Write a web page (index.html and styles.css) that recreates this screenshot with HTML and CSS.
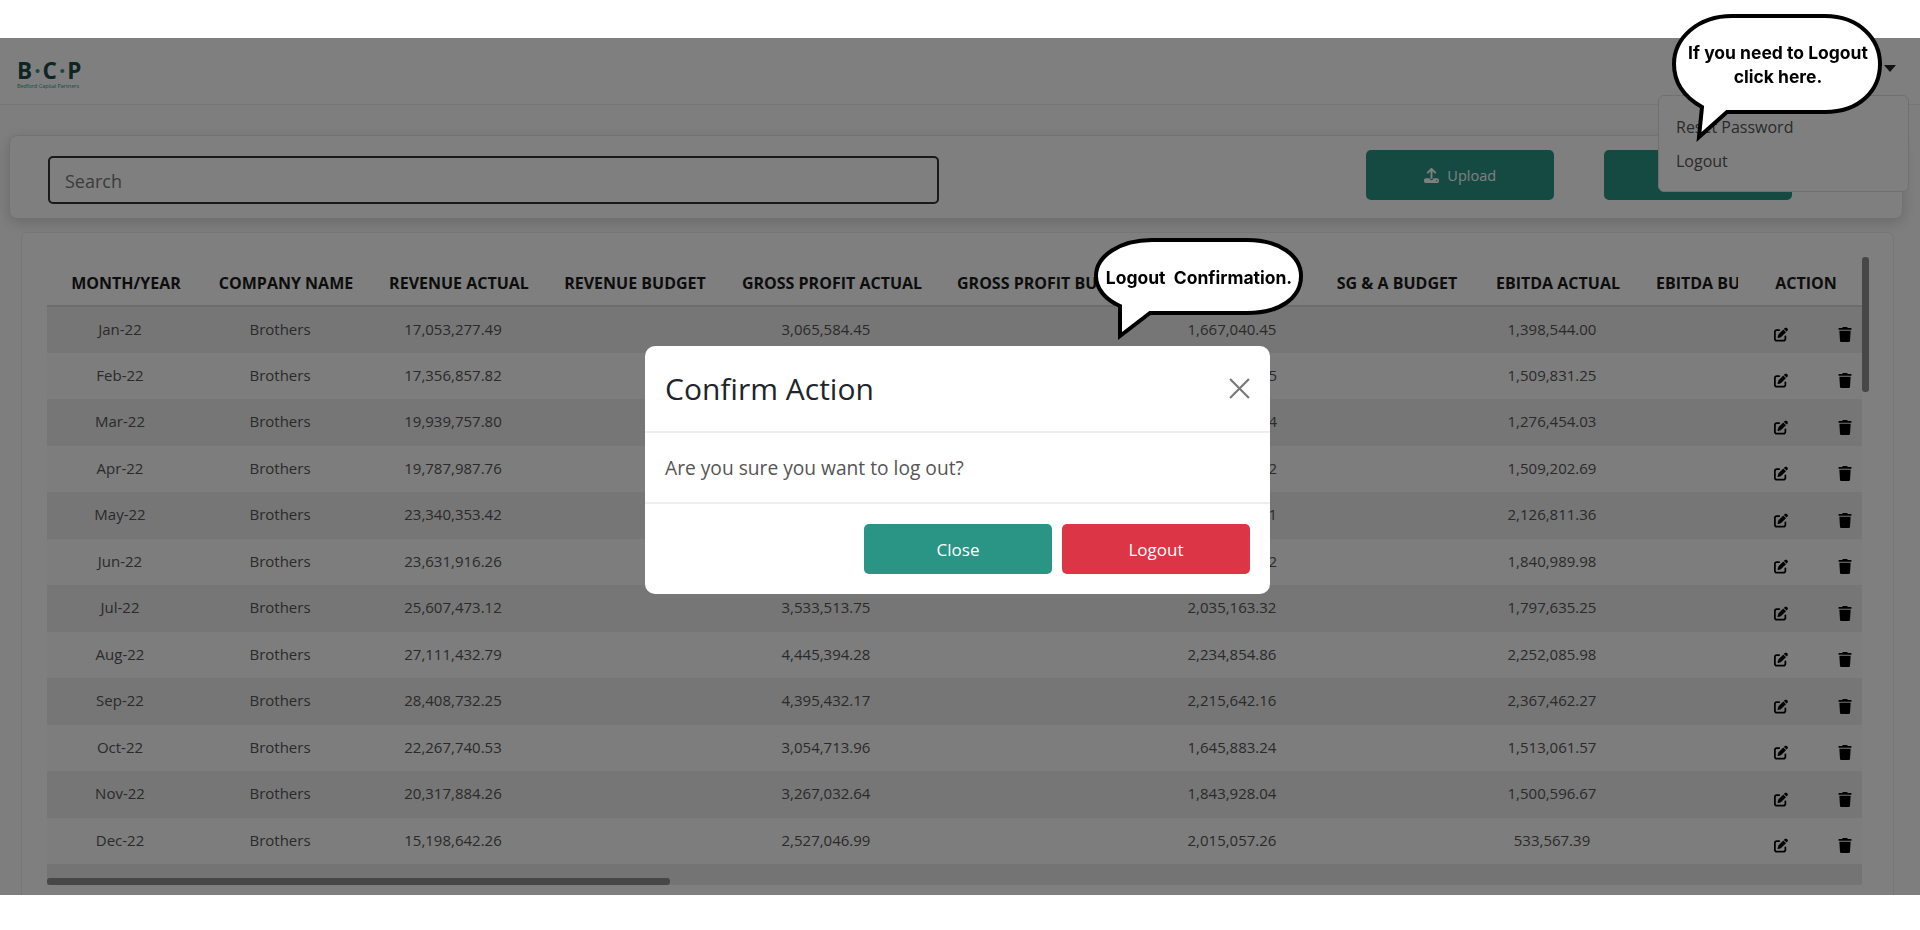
FILE: index.html
```html
<!DOCTYPE html>
<html lang="en">
<head>
  <meta charset="UTF-8">
  <meta name="viewport" content="width=device-width, initial-scale=1.0">
  <title>Confirm Action</title>
  <link rel="stylesheet" href="styles.css">
</head>
<body>
  <svg class="icon-defs" aria-hidden="true">
    <symbol id="icon-edit" viewBox="0 0 512 512"><path d="M471.6 21.7c-21.9-21.9-57.3-21.9-79.2 0L362.3 51.7l97.9 97.9 30.1-30.1c21.9-21.9 21.9-57.3 0-79.2L471.6 21.7zm-299.2 220c-6.1 6.1-10.8 13.6-13.5 21.9l-29.6 88.8c-2.9 8.6-.6 18.1 5.8 24.6s15.9 8.7 24.6 5.8l88.8-29.6c8.2-2.7 15.7-7.4 21.9-13.5L437.7 172.3 339.7 74.3 172.4 241.7zM96 64C43 64 0 107 0 160V416c0 53 43 96 96 96H352c53 0 96-43 96-96V320c0-17.7-14.3-32-32-32s-32 14.3-32 32v96c0 17.7-14.3 32-32 32H96c-17.7 0-32-14.3-32-32V160c0-17.7 14.3-32 32-32h96c17.7 0 32-14.3 32-32s-14.3-32-32-32H96z"/></symbol>
    <symbol id="icon-trash" viewBox="0 0 448 512"><path d="M135.2 17.7L128 32H32C14.3 32 0 46.3 0 64S14.3 96 32 96H416c17.7 0 32-14.3 32-32s-14.3-32-32-32H320l-7.2-14.3C307.4 6.8 296.3 0 284.2 0H163.8c-12.1 0-23.2 6.8-28.6 17.7zM416 128H32L53.2 467c1.6 25.3 22.6 45 47.9 45H346.9c25.3 0 46.3-19.7 47.9-45L416 128z"/></symbol>
  </svg>

  <div class="page">
    <div class="app">
      <nav class="navbar">
        <div class="logo">
          <div class="logo-mark">B<span>·</span>C<span>·</span>P</div>
          <div class="logo-name">Bedford Capital Partners</div>
        </div>
        <span class="caret"></span>
      </nav>

      <section class="toolbar">
        <input class="search" type="text" placeholder="Search">
        <button class="btn-upload">
          <svg class="upload-icon" viewBox="0 0 512 512"><path d="M288 109.3V352c0 17.7-14.3 32-32 32s-32-14.3-32-32V109.3l-73.4 73.4c-12.5 12.5-32.8 12.5-45.3 0s-12.5-32.8 0-45.3l128-128c12.5-12.5 32.8-12.5 45.3 0l128 128c12.5 12.5 12.5 32.8 0 45.3s-32.8 12.5-45.3 0L288 109.3zM64 352H192c0 35.3 28.7 64 64 64s64-28.7 64-64H448c35.3 0 64 28.7 64 64v32c0 35.3-28.7 64-64 64H64c-35.3 0-64-28.7-64-64V416c0-35.3 28.7-64 64-64zM432 456a24 24 0 1 0 0-48 24 24 0 1 0 0 48z"/></svg>
          Upload
        </button>
        <button class="btn-second"></button>
      </section>

      <section class="table-card">
        <div class="table-wrap">
          <table class="data-table">
            <thead>
              <tr>
                <th>MONTH/YEAR</th><th>COMPANY NAME</th><th>REVENUE ACTUAL</th><th>REVENUE BUDGET</th><th>GROSS PROFIT ACTUAL</th><th>GROSS PROFIT BUDGET</th><th>SG &amp; A ACTUAL</th><th>SG &amp; A BUDGET</th><th>EBITDA ACTUAL</th><th>EBITDA BUDGET</th><th class="action">ACTION</th>
              </tr>
            </thead>
            <tbody>
              <tr>
                <td>Jan-22</td><td>Brothers</td><td>17,053,277.49</td><td></td><td>3,065,584.45</td><td></td><td>1,667,040.45</td><td></td><td>1,398,544.00</td><td></td>
                <td class="action"><div class="row-icons"><svg><use href="#icon-edit"/></svg><svg><use href="#icon-trash"/></svg></div></td>
              </tr>
              <tr>
                <td>Feb-22</td><td>Brothers</td><td>17,356,857.82</td><td></td><td></td><td></td><td class="tail">5</td><td></td><td>1,509,831.25</td><td></td>
                <td class="action"><div class="row-icons"><svg><use href="#icon-edit"/></svg><svg><use href="#icon-trash"/></svg></div></td>
              </tr>
              <tr>
                <td>Mar-22</td><td>Brothers</td><td>19,939,757.80</td><td></td><td></td><td></td><td class="tail">4</td><td></td><td>1,276,454.03</td><td></td>
                <td class="action"><div class="row-icons"><svg><use href="#icon-edit"/></svg><svg><use href="#icon-trash"/></svg></div></td>
              </tr>
              <tr>
                <td>Apr-22</td><td>Brothers</td><td>19,787,987.76</td><td></td><td></td><td></td><td class="tail">2</td><td></td><td>1,509,202.69</td><td></td>
                <td class="action"><div class="row-icons"><svg><use href="#icon-edit"/></svg><svg><use href="#icon-trash"/></svg></div></td>
              </tr>
              <tr>
                <td>May-22</td><td>Brothers</td><td>23,340,353.42</td><td></td><td></td><td></td><td class="tail">1</td><td></td><td>2,126,811.36</td><td></td>
                <td class="action"><div class="row-icons"><svg><use href="#icon-edit"/></svg><svg><use href="#icon-trash"/></svg></div></td>
              </tr>
              <tr>
                <td>Jun-22</td><td>Brothers</td><td>23,631,916.26</td><td></td><td></td><td></td><td class="tail">2</td><td></td><td>1,840,989.98</td><td></td>
                <td class="action"><div class="row-icons"><svg><use href="#icon-edit"/></svg><svg><use href="#icon-trash"/></svg></div></td>
              </tr>
              <tr>
                <td>Jul-22</td><td>Brothers</td><td>25,607,473.12</td><td></td><td>3,533,513.75</td><td></td><td>2,035,163.32</td><td></td><td>1,797,635.25</td><td></td>
                <td class="action"><div class="row-icons"><svg><use href="#icon-edit"/></svg><svg><use href="#icon-trash"/></svg></div></td>
              </tr>
              <tr>
                <td>Aug-22</td><td>Brothers</td><td>27,111,432.79</td><td></td><td>4,445,394.28</td><td></td><td>2,234,854.86</td><td></td><td>2,252,085.98</td><td></td>
                <td class="action"><div class="row-icons"><svg><use href="#icon-edit"/></svg><svg><use href="#icon-trash"/></svg></div></td>
              </tr>
              <tr>
                <td>Sep-22</td><td>Brothers</td><td>28,408,732.25</td><td></td><td>4,395,432.17</td><td></td><td>2,215,642.16</td><td></td><td>2,367,462.27</td><td></td>
                <td class="action"><div class="row-icons"><svg><use href="#icon-edit"/></svg><svg><use href="#icon-trash"/></svg></div></td>
              </tr>
              <tr>
                <td>Oct-22</td><td>Brothers</td><td>22,267,740.53</td><td></td><td>3,054,713.96</td><td></td><td>1,645,883.24</td><td></td><td>1,513,061.57</td><td></td>
                <td class="action"><div class="row-icons"><svg><use href="#icon-edit"/></svg><svg><use href="#icon-trash"/></svg></div></td>
              </tr>
              <tr>
                <td>Nov-22</td><td>Brothers</td><td>20,317,884.26</td><td></td><td>3,267,032.64</td><td></td><td>1,843,928.04</td><td></td><td>1,500,596.67</td><td></td>
                <td class="action"><div class="row-icons"><svg><use href="#icon-edit"/></svg><svg><use href="#icon-trash"/></svg></div></td>
              </tr>
              <tr>
                <td>Dec-22</td><td>Brothers</td><td>15,198,642.26</td><td></td><td>2,527,046.99</td><td></td><td>2,015,057.26</td><td></td><td>533,567.39</td><td></td>
                <td class="action"><div class="row-icons"><svg><use href="#icon-edit"/></svg><svg><use href="#icon-trash"/></svg></div></td>
              </tr>
            </tbody>
          </table>
          <div class="hscroll-thumb"></div>
        </div>
        <div class="vscroll-thumb"></div>
      </section>

      <div class="dropdown">
        <a>Reset Password</a>
        <a>Logout</a>
      </div>

      <div class="backdrop"></div>

      <div class="modal">
        <div class="modal-header">
          <h2>Confirm Action</h2>
          <svg class="modal-close" viewBox="0 0 20 20"><path d="M1 1L19 19M19 1L1 19"/></svg>
        </div>
        <div class="modal-body">Are you sure you want to log out?</div>
        <div class="modal-footer">
          <button class="btn-close">Close</button>
          <button class="btn-logout">Logout</button>
        </div>
      </div>
    </div>

    <div class="callout callout-menu">
      <svg viewBox="0 0 216 132"><path d="M62 4H155C190 4 210 28 210 52C210 78 190 100 155 100H57L29 125L32 95C14 85 4 70 4 52C4 26 28 4 62 4Z"/></svg>
      <p>If you need to Logout<br>click here.</p>
    </div>

    <div class="callout callout-modal">
      <svg viewBox="0 0 214 106"><path d="M60 4H155C188 4 209 20 209 40C209 62 188 77 155 77H58L28 100V70C14 64 4 53 4 40C4 20 28 4 60 4Z"/></svg>
      <p>Logout&nbsp; Confirmation.</p>
    </div>
  </div>
</body>
</html>
```

FILE: styles.css
```css
* {
  box-sizing: border-box;
}

body {
  margin: 0;
  background: #fff;
  font-family: "Open Sans", "Noto Sans", sans-serif;
}

.icon-defs {
  display: none;
}

.page {
  position: relative;
  height: 930px;
  padding-top: 38px;
  overflow: hidden;
}

.app {
  position: relative;
  height: 857px;
  overflow: hidden;
  background: #fdfdfd;
}

.backdrop {
  position: absolute;
  inset: 0;
  background: rgba(0, 0, 0, 0.5);
}

/* navbar */
.navbar {
  display: flex;
  justify-content: space-between;
  align-items: center;
  height: 67px;
  padding: 6px 24px 0 17px;
  border-bottom: 1px solid #ececec;
  background: #fff;
}

.logo {
  width: 66px;
  color: #1f4a46;
}

.logo-mark {
  font-size: 22.5px;
  font-weight: 700;
  line-height: 25px;
  letter-spacing: 2px;
  white-space: nowrap;
}

.logo-mark span {
  color: #2a9485;
}

.logo-name {
  font-size: 5.4px;
  line-height: 7px;
  white-space: nowrap;
  color: #2a9485;
}

.caret {
  width: 0;
  height: 0;
  margin-bottom: 12px;
  border-left: 6px solid transparent;
  border-right: 6px solid transparent;
  border-top: 7px solid #222;
}

/* search and buttons */
.toolbar {
  display: flex;
  height: 84px;
  margin: 30px 17px 13px 9px;
  padding: 14px 110px 0 38px;
  background: #fff;
  border: 1px solid #e4e4e4;
  border-radius: 8px;
  box-shadow: 0 4px 14px rgba(0, 0, 0, 0.16);
}

.search {
  width: 892px;
  height: 48px;
  margin-top: 6px;
  padding: 2px 15px 0;
  border: 2px solid #333;
  border-radius: 5px;
  background: transparent;
  font-family: inherit;
  font-size: 18px;
}

.search::placeholder {
  color: #777;
}

.toolbar button {
  height: 50px;
  border: none;
  border-radius: 5px;
  background: #2a9485;
  color: #fff;
  font-family: inherit;
  font-size: 14.5px;
}

.btn-upload {
  display: flex;
  justify-content: center;
  align-items: center;
  gap: 8px;
  width: 188px;
  margin-left: 427px;
}

.upload-icon {
  width: 15px;
  height: 15px;
  fill: #fff;
}

.btn-second {
  width: 188px;
  margin-left: 50px;
}

/* table */
.table-card {
  position: relative;
  height: 680px;
  margin: 0 26px 0 21px;
  padding: 24px 32px 0 25px;
  background: #fff;
  border: 1px solid #ededed;
  border-radius: 6px;
}

.table-wrap {
  position: relative;
  width: 1815px;
  height: 628px;
  overflow: hidden;
  background: #e9e9e9;
}

.data-table {
  width: 1888px;
  table-layout: fixed;
  border-collapse: collapse;
  font-size: 15px;
  text-align: center;
}

.data-table th {
  height: 49px;
  padding: 3px 0 0 12px;
  background: #fff;
  border-bottom: 2px solid #d8d8d8;
  color: #1a1a1a;
  font-size: 16px;
  font-weight: 700;
  white-space: nowrap;
  overflow: hidden;
}

.data-table th:nth-child(1) { width: 146px; }
.data-table th:nth-child(2) { width: 174px; }
.data-table th:nth-child(3) { width: 172px; }
.data-table th:nth-child(4) { width: 180px; }
.data-table th:nth-child(5) { width: 214px; }
.data-table th:nth-child(6) { width: 218px; }
.data-table th:nth-child(7) { width: 162px; }
.data-table th:nth-child(8) { width: 156px; }
.data-table th:nth-child(9) { width: 166px; }
.data-table th:nth-child(10) { width: 176px; padding-left: 21px; text-align: left; }
.data-table th:nth-child(11) { width: 124px; }

.data-table td {
  height: 46.5px;
  padding: 0 0 2px;
  color: #555;
}

.data-table tbody tr {
  background: #fafafa;
}

.data-table tbody tr:nth-child(odd) {
  background: #ececec;
}

.data-table td.tail {
  padding-right: 36px;
  text-align: right;
}

.data-table .action {
  position: sticky;
  right: 0;
  background: inherit;
}

.data-table th.action {
  background: #fff;
}

.row-icons {
  display: flex;
  gap: 50px;
  margin-top: 12px;
  padding-left: 36px;
}

.row-icons svg {
  width: 14px;
  height: 15px;
  fill: #000;
}

.hscroll-thumb {
  position: absolute;
  left: 0;
  top: 621px;
  width: 623px;
  height: 7px;
  border-radius: 3px;
  background: #8f8f8f;
}

.vscroll-thumb {
  position: absolute;
  left: 1840px;
  top: 24px;
  width: 7px;
  height: 135px;
  border-radius: 3px;
  background: #8f8f8f;
}

/* open user menu */
.dropdown {
  position: absolute;
  left: 1658px;
  top: 57px;
  display: flex;
  flex-direction: column;
  gap: 9px;
  width: 251px;
  height: 97px;
  padding: 19px 17px;
  background: #fff;
  border: 1px solid #e0e0e0;
  border-radius: 6px;
  color: #555;
  font-size: 16px;
  line-height: 25px;
}

/* confirm dialog */
.modal {
  position: absolute;
  left: 645px;
  top: 308px;
  width: 625px;
  height: 248px;
  background: #fff;
  border-radius: 10px;
}

.modal-header {
  display: flex;
  justify-content: space-between;
  align-items: center;
  height: 87px;
  padding: 0 20px;
  border-bottom: 2px solid #eceef1;
}

.modal-header h2 {
  margin: 0;
  color: #212529;
  font-size: 30px;
  font-weight: 500;
}

.modal-close {
  width: 21px;
  height: 21px;
  fill: none;
  stroke: #777;
  stroke-width: 2;
}

.modal-body {
  height: 71px;
  padding: 0 20px;
  border-bottom: 2px solid #eceef1;
  color: #555;
  font-size: 19.2px;
  line-height: 70px;
}

.modal-footer {
  display: flex;
  justify-content: flex-end;
  gap: 10px;
  padding: 20px 20px 0 0;
}

.modal-footer button {
  width: 188px;
  height: 50px;
  border: none;
  border-radius: 5px;
  color: #fff;
  font-family: inherit;
  font-size: 17px;
}

.btn-close {
  background: #2a9485;
}

.btn-logout {
  background: #dc3545;
}

/* tutorial speech bubbles */
.callout {
  position: absolute;
  color: #000;
  font-family: Inter, "Open Sans", sans-serif;
  font-size: 17.5px;
  font-weight: 700;
  text-align: center;
}

.callout svg {
  display: block;
  width: 100%;
  height: 100%;
  fill: #fff;
  stroke: #000;
  stroke-width: 4;
}

.callout p {
  position: absolute;
  left: 0;
  right: 0;
  margin: 0;
  white-space: nowrap;
}

.callout-menu {
  left: 1670px;
  top: 12px;
  width: 216px;
  height: 132px;
}

.callout-menu p {
  top: 29px;
  line-height: 24px;
}

.callout-modal {
  left: 1092px;
  top: 236px;
  width: 214px;
  height: 106px;
}

.callout-modal p {
  top: 30px;
  line-height: 24px;
}
```
